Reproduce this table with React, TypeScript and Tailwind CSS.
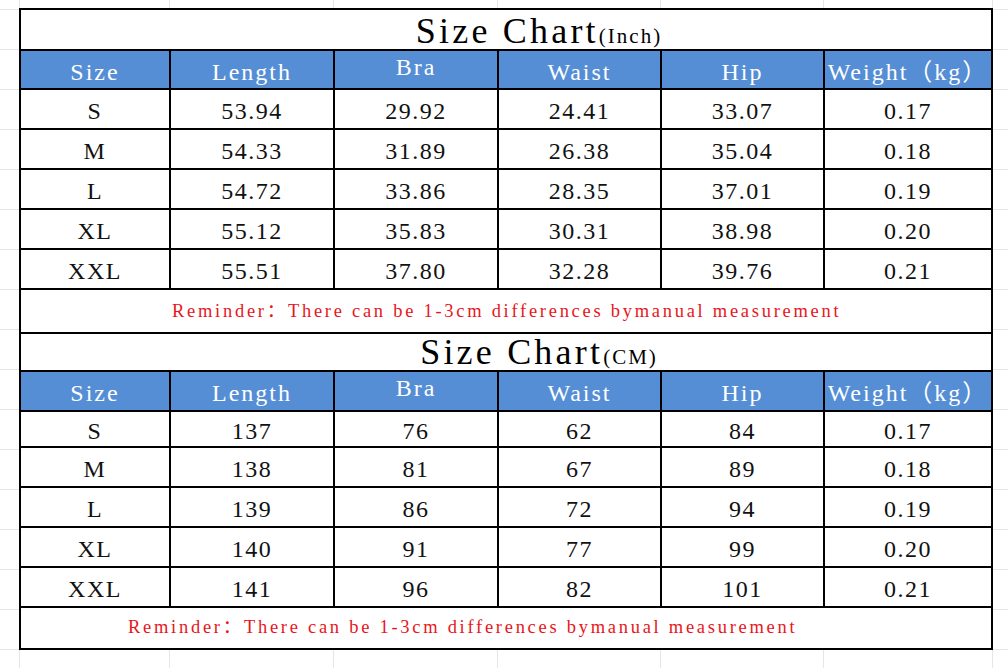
import React from "react";

const headers = ["Size", "Length", "Bra", "Waist", "Hip", "Weight（kg）"];

const inchRows = [
  ["S", "53.94", "29.92", "24.41", "33.07", "0.17"],
  ["M", "54.33", "31.89", "26.38", "35.04", "0.18"],
  ["L", "54.72", "33.86", "28.35", "37.01", "0.19"],
  ["XL", "55.12", "35.83", "30.31", "38.98", "0.20"],
  ["XXL", "55.51", "37.80", "32.28", "39.76", "0.21"],
];

const cmRows = [
  ["S", "137", "76", "62", "84", "0.17"],
  ["M", "138", "81", "67", "89", "0.18"],
  ["L", "139", "86", "72", "94", "0.19"],
  ["XL", "140", "91", "77", "99", "0.20"],
  ["XXL", "141", "96", "82", "101", "0.21"],
];

const cols = "grid grid-cols-[150px_164px_164px_163px_163px_166px]";

function Chart({
  unit,
  rows,
  firstRowH,
  titleH,
  headerH,
  reminderPad,
  bottom,
}: {
  unit: string;
  rows: string[][];
  firstRowH: string;
  titleH: string;
  headerH: string;
  reminderPad: string;
  bottom: boolean;
}) {
  return (
    <div
      className={
        "w-[974px] ml-[19px] bg-white border-black border-t-2 border-l-2 border-r-2 " +
        (bottom ? "border-b-2" : "")
      }
    >
      <div
        className={
          "flex items-end justify-center border-b-2 border-black pl-[66px] " + titleH
        }
      >
        <span className="text-[36px] leading-none tracking-[3.2px] text-black pb-[0px]">
          Size Chart
        </span>
        <span className="text-[21px] leading-none tracking-[2px] text-black pb-[2px]">
          ({unit})
        </span>
      </div>
      <div className={cols + " bg-[#558ed5] border-b-2 border-black"}>
        {headers.map((h, i) => (
          <div
            key={h}
            className={
              "flex items-center justify-center text-white text-[24px] tracking-[2px] " +
              headerH +
              (i < 5 ? " border-r-2 border-black" : "") +
              (h === "Bra" ? " pb-[6px]" : " pt-[4px]")
            }
          >
            {h}
          </div>
        ))}
      </div>
      {rows.map((r, ri) => (
        <div key={r[0]} className={cols + " border-b-2 border-black"}>
          {r.map((c, i) => (
            <div
              key={i}
              className={
                "flex items-center justify-center text-[24px] tracking-[1.5px] text-[#111] pt-[4px] " +
                (ri === 0 ? firstRowH : "h-[38px]") +
                (i < 5 ? " border-r-2 border-black" : "")
              }
            >
              {c}
            </div>
          ))}
        </div>
      ))}
      <div
        className={
          "flex items-center justify-start text-[#e8161b] text-[18.5px] tracking-[2.72px] h-[40px] " +
          reminderPad
        }
      >
        Reminder：There can be 1-3cm differences bymanual measurement
      </div>
    </div>
  );
}

export default function App() {
  return (
    <div
      className="w-[1008px] h-[668px] overflow-hidden bg-white pt-[8px] font-['Liberation_Serif','Noto_Sans_CJK_SC',serif] bg-[linear-gradient(to_right,transparent_19px,#e6e6e6_19px,#e6e6e6_20px,transparent_20px,transparent_169px,#e6e6e6_169px,#e6e6e6_170px,transparent_170px,transparent_333px,#e6e6e6_333px,#e6e6e6_334px,transparent_334px,transparent_497px,#e6e6e6_497px,#e6e6e6_498px,transparent_498px,transparent_660px,#e6e6e6_660px,#e6e6e6_661px,transparent_661px,transparent_823px,#e6e6e6_823px,#e6e6e6_824px,transparent_824px,transparent_992px,#e6e6e6_992px,#e6e6e6_993px,transparent_993px),repeating-linear-gradient(to_bottom,transparent_0px,transparent_9px,#e6e6e6_9px,#e6e6e6_10px,transparent_10px,transparent_40px)]"
    >
      <Chart
        unit="Inch"
        rows={inchRows}
        firstRowH="h-[38px]"
        titleH="h-[41px]"
        headerH="h-[37px]"
        reminderPad="pl-[151px] pt-[2px] h-[42px]"
        bottom={false}
      />
      <Chart
        unit="CM"
        rows={cmRows}
        firstRowH="h-[34px]"
        titleH="h-[38px]"
        headerH="h-[38px]"
        reminderPad="pl-[107px]"
        bottom={true}
      />
    </div>
  );
}
